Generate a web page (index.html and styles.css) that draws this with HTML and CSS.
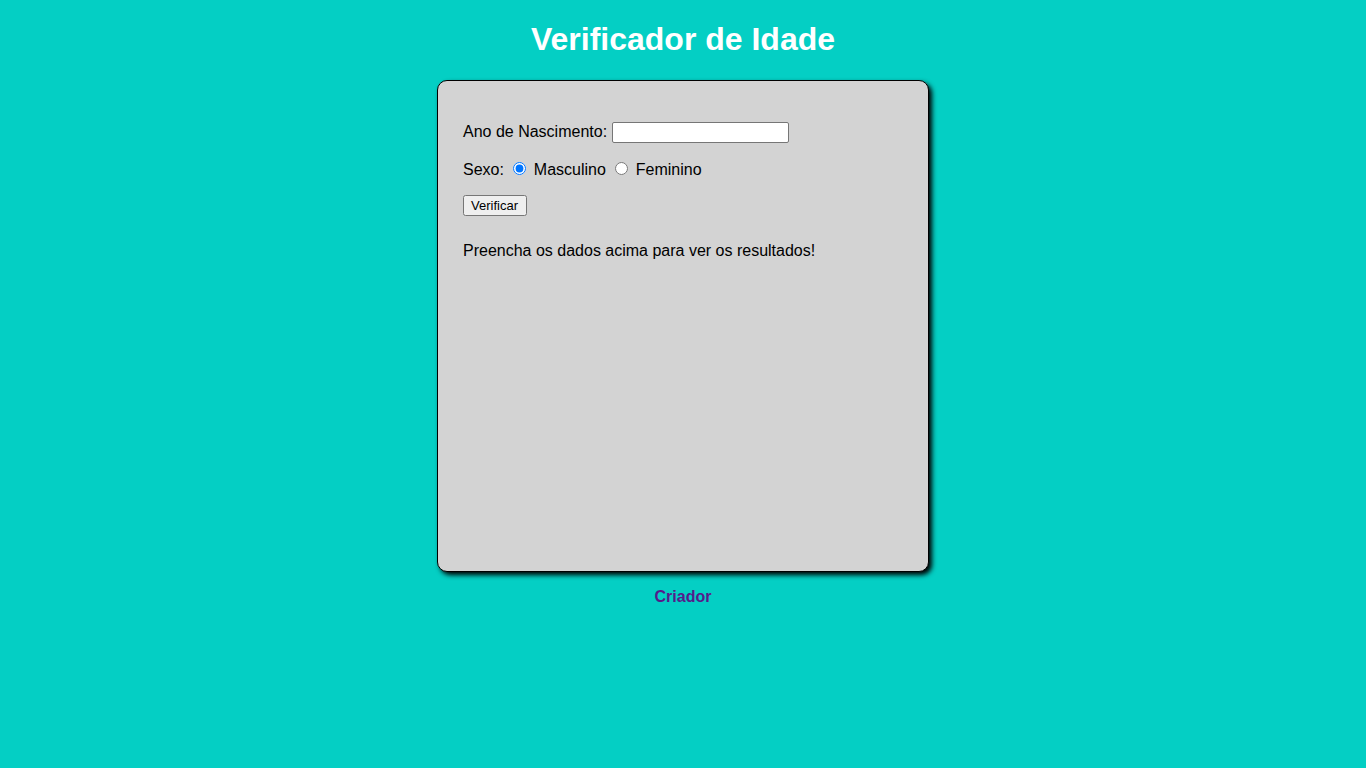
FILE: index.html
```html
<!DOCTYPE html>
<html lang="pt-BR">
<head>
<meta charset="UTF-8">
<title>Verificador de Idade</title>
<link rel="stylesheet" href="styles.css">
</head>
<body>
<header>
  <h1 class="title">Verificador de Idade</h1>
</header>
<section class="card">
  <div class="form">
    <p class="row">Ano de Nascimento: <input type="number" class="year" id="txtano"></p>
    <p class="row">Sexo: <input type="radio" name="radsex" id="mas" checked> <label for="mas">Masculino</label> <input type="radio" name="radsex" id="fem"> <label for="fem">Feminino</label></p>
    <p class="row"><input type="button" value="Verificar" class="btn"></p>
  </div>
  <div class="result">
    <p>Preencha os dados acima para ver os resultados!</p>
  </div>
</section>
<footer class="footer">
  <p><a href="#" class="creator">Criador</a></p>
</footer>
</body>
</html>
```
FILE: styles.css
```css
body {
  margin: 0;
  background: #04cfc4;
  font-family: "Liberation Sans", Arial, sans-serif;
  font-size: 16px;
}
.title {
  color: #ffffff;
  text-align: center;
  font-size: 32px;
  margin: 21px 0 22px;
}
.card {
  width: 440px;
  height: 440px;
  margin: 0 auto;
  padding: 25px;
  background: #d3d3d3;
  border: 1px solid #000;
  border-radius: 10px;
  box-shadow: 3px 3px 5px #000;
}
.row {
  margin: 16px 0;
}
.year {
  width: 171px;
  height: 17px;
  padding: 1px 2px;
  border: 1px solid #767676;
  border-radius: 2px;
  background: #fff;
  font-family: "Liberation Sans", Arial, sans-serif;
  vertical-align: middle;
  -moz-appearance: textfield;
  appearance: textfield;
}
.year::-webkit-outer-spin-button,
.year::-webkit-inner-spin-button { -webkit-appearance: none; margin: 0; }
input[type="radio"] {
  margin: 3px 3px 0 5px;
  accent-color: #0075ff;
}
.btn {
  font-family: "Liberation Sans", Arial, sans-serif;
  font-size: 13px;
  padding: 1px 7px 1px 6px;
}
.result {
  margin-top: 26px;
}
.footer {
  text-align: center;
}
.creator {
  color: #551a8b;
  font-weight: bold;
  text-decoration: none;
}
```
